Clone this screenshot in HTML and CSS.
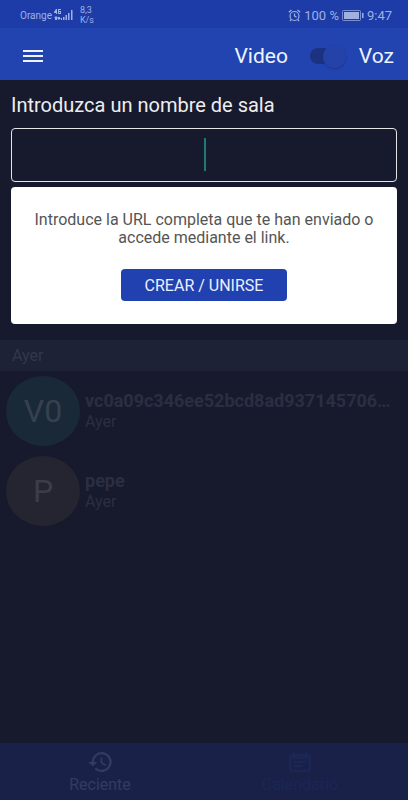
FILE: index.html
```html
<!DOCTYPE html>
<html lang="es">
<head>
<meta charset="utf-8">
<meta name="viewport" content="width=device-width, initial-scale=1">
<title>Salas</title>
<link rel="stylesheet" href="styles.css">
</head>
<body>
<div class="app">
  <div class="status">
    <div class="status-group">
      <span>Orange</span>
      <svg class="signal" viewBox="0 0 20 12" width="20" height="12" fill="currentColor">
        <path d="M0 3L2 0H3V5H2V4H0ZM4 0H7V1H5V4H6V3H5V2H7V5H4Z"/>
        <path d="M2 7L4 9H3V11H1V9H0ZM5 11L3 9H4V8H6V9H7Z"/>
        <path d="M7 9h1v2H7zM9 8h1.500v3H9zM11.500 6H13v5h-1.500zM14 4h1.500v7H14zM17 1h1.500v10H17z"/>
      </svg>
      <span class="speed">8,3<br>K/s</span>
    </div>
    <div class="status-group status-right">
      <svg viewBox="0 0 13 13" width="13" height="13" fill="none" stroke="currentColor" stroke-width="1.200">
        <circle cx="6.500" cy="7" r="4.500"/><path d="M6.500 4.500V7L8.500 8.300M.8 3.300L3.500 1M12.200 3.300L9.500 1M3.300 10.500L2 12M9.700 10.500L11 12"/>
      </svg>
      <span>100 %</span>
      <svg class="battery" viewBox="0 0 22 11" width="22" height="11">
        <rect x=".5" y=".5" width="18" height="10" rx="1" fill="none" stroke="currentColor" opacity=".7"/><path d="M2 2h15v7H2zM20 3h1.500v5H20z" fill="currentColor"/>
      </svg>
      <span>9:47</span>
    </div>
  </div>

  <header class="toolbar">
    <button class="menu" type="button" aria-label="Menú">
      <svg viewBox="0 0 20 14" width="20" height="14" fill="currentColor"><path d="M0 1h20v2H0zM0 6h20v2H0zM0 11h20v2H0z"/></svg>
    </button>
    <label class="mode" for="mode">Video</label>
    <input class="switch" id="mode" type="checkbox" role="switch" checked>
    <label class="mode" for="mode">Voz</label>
  </header>

  <main class="content">
    <form class="room">
      <label class="room-label" for="room">Introduzca un nombre de sala</label>
      <div class="field">
        <input class="room-input" id="room" type="text">
        <span class="caret"></span>
      </div>
      <div class="card">
        <p class="hint">Introduce la URL completa que te han enviado o accede mediante el link.</p>
        <button class="join" type="button">CREAR / UNIRSE</button>
      </div>
    </form>

    <section>
      <h2 class="section-title">Ayer</h2>
      <ul class="recent">
        <li class="item">
          <div class="avatar avatar-teal">V0</div>
          <div class="info">
            <div class="name">vc0a09c346ee52bcd8ad937145706…</div>
            <div class="date">Ayer</div>
          </div>
        </li>
        <li class="item">
          <div class="avatar avatar-brown">P</div>
          <div class="info">
            <div class="name">pepe</div>
            <div class="date">Ayer</div>
          </div>
        </li>
      </ul>
    </section>
  </main>

  <nav class="tabs">
    <a class="tab" href="#reciente">
      <svg viewBox="1 3 21 18" width="24" height="20" fill="currentColor"><path d="M13 3a9 9 0 0 0-9 9H1l3.890 3.890.07.140L9 12H6a7 7 0 1 1 7 7c-1.930 0-3.680-.790-4.940-2.060l-1.420 1.420A9 9 0 1 0 13 3zm-1 5v5l4.280 2.540.720-1.210-3.500-2.080V8z"/></svg>
      <span>Reciente</span>
    </a>
    <a class="tab tab-calendar" href="#calendario">
      <svg viewBox="3 1 18 20" width="22" height="20" preserveAspectRatio="none" fill="currentColor"><path d="M17 10H7v2h10zM19 3h-1V1h-2v2H8V1H6v2H5a2 2 0 0 0-2 2v14a2 2 0 0 0 2 2h14a2 2 0 0 0 2-2V5a2 2 0 0 0-2-2zm0 16H5V8h14zm-5-5H7v2h7z"/></svg>
      <span>Calendario</span>
    </a>
  </nav>
</div>
</body>
</html>
```
FILE: styles.css
```css
* {
  box-sizing: border-box;
}

body {
  margin: 0;
  background: #171a2c;
  font-family: Roboto, "Liberation Sans", sans-serif;
}

.app {
  display: flex;
  flex-direction: column;
  min-height: 100vh;
}

.status {
  display: flex;
  justify-content: space-between;
  align-items: center;
  height: 28px;
  padding: 2px 16px 0 20px;
  background: #1d3ca8;
  color: #9fb0e4;
  font-size: 10px;
}

.status-group {
  display: flex;
  align-items: center;
  gap: 2px;
}

.status-right {
  gap: 3px;
  font-size: 13px;
}

.speed {
  margin-left: 4px;
  font-size: 9px;
  line-height: 10px;
}

.toolbar {
  display: flex;
  align-items: center;
  height: 52px;
  padding: 4px 14px 0 23px;
  background: #2244b0;
  color: #edf4ff;
}

.menu {
  display: flex;
  margin-right: auto;
  padding: 0;
  border: 0;
  background: none;
  color: inherit;
}

.mode {
  font-size: 21px;
}

.switch {
  appearance: none;
  display: flex;
  align-items: center;
  justify-content: flex-end;
  width: 36px;
  height: 16px;
  margin: 0 13px 0 22px;
  border-radius: 8px;
  background: linear-gradient(90deg, #1c3180 22px, transparent 22px);
}

.switch::before {
  content: "";
  flex: none;
  width: 23px;
  height: 23px;
  border-radius: 50%;
  background: #2442a8;
  box-shadow: 0 1px 2px #1b378f;
}

.content {
  flex: 1;
}

.room {
  padding: 12px 11px 16px;
}

.room-label {
  display: block;
  font-size: 20px;
  line-height: 26px;
  color: #eeeef0;
}

.field {
  position: relative;
  margin-top: 10px;
}

.room-input {
  display: block;
  width: 100%;
  height: 54px;
  padding: 0 12px;
  border: 1px solid #e4e4e4;
  border-radius: 4px;
  outline: 0;
  background: transparent;
  color: #eeeef0;
  font: inherit;
  font-size: 26px;
  text-align: center;
}

.caret {
  position: absolute;
  top: 10px;
  left: 50%;
  width: 2px;
  height: 33px;
  background: #217a72;
}

.card {
  display: flex;
  flex-direction: column;
  align-items: center;
  margin-top: 5px;
  padding: 24px 20px 23px;
  border-radius: 4px;
  background: #fff;
}

.hint {
  margin: 0;
  font-size: 16px;
  line-height: 18px;
  color: #555;
  text-align: center;
}

.join {
  height: 32px;
  margin-top: 22px;
  padding: 0 24px;
  border: 0;
  border-radius: 4px;
  background: #2141b0;
  color: #e9f0ff;
  font: inherit;
  font-size: 16px;
}

.section-title {
  margin: 0;
  padding: 1px 12px 0;
  background: #1d2236;
  color: #33374a;
  font-size: 16px;
  font-weight: 400;
  line-height: 30px;
}

.recent {
  display: flex;
  flex-direction: column;
  gap: 10px;
  margin: 0;
  padding: 5px 8px 0 6px;
  list-style: none;
}

.item {
  display: flex;
  align-items: center;
  gap: 5px;
}

.avatar {
  display: flex;
  flex: none;
  align-items: center;
  justify-content: center;
  width: 74px;
  height: 70px;
  border-radius: 50%;
  color: #36414f;
  font-size: 32px;
}

.avatar-teal {
  background: #1a2938;
}

.avatar-brown {
  background: #242530;
  color: #3b3d48;
}

.info {
  min-width: 0;
  color: #2b2e41;
}

.name {
  overflow: hidden;
  font-size: 18px;
  font-weight: 700;
  line-height: 22px;
  text-overflow: ellipsis;
  white-space: nowrap;
}

.date {
  font-size: 16px;
  line-height: 20px;
}

.tabs {
  display: flex;
  height: 57px;
  padding-right: 8px;
  background: #1a2148;
}

.tab {
  display: flex;
  flex: 1;
  flex-direction: column;
  align-items: center;
  gap: 3px;
  padding-top: 9px;
  color: #313b64;
  font-size: 16px;
  line-height: 20px;
  text-decoration: none;
}

.tab-calendar {
  color: #1b2655;
}
```
